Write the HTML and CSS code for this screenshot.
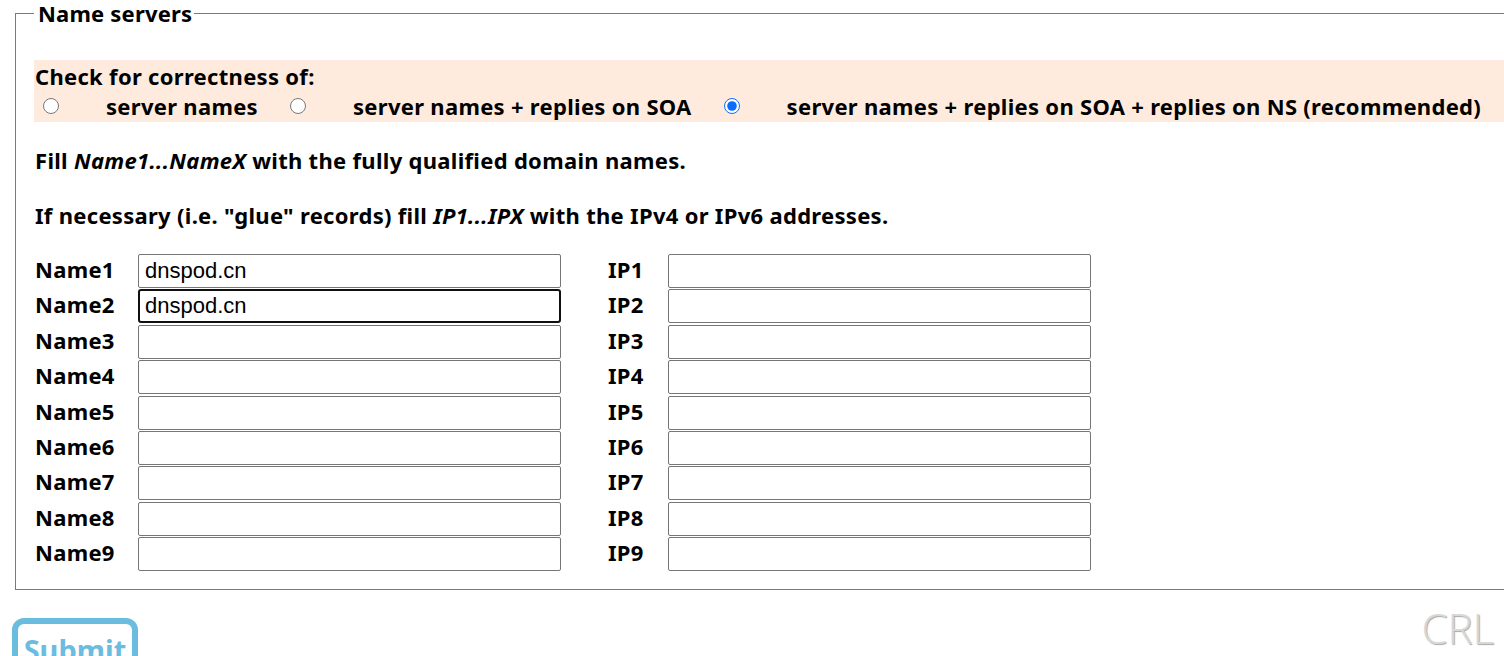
FILE: index.html
```html
<!DOCTYPE html>
<html lang="en">
<head>
  <meta charset="UTF-8" />
  <title>Name servers</title>
  <link rel="stylesheet" href="styles.css">
</head>
<body>

  <form class="check-form">
    <fieldset class="ns-box">
      <legend>Name servers</legend>

      <div class="check-type">
        <div class="check-title">Check for correctness of:</div>
        <div class="check-options">
          <input type="radio" name="level" id="lvl1">
          <label for="lvl1">server names</label>
          <input type="radio" name="level" id="lvl2">
          <label for="lvl2">server names + replies on SOA</label>
          <input type="radio" name="level" id="lvl3" checked>
          <label for="lvl3">server names + replies on SOA + replies on NS (recommended)</label>
        </div>
      </div>

      <p class="hint">Fill <em>Name1...NameX</em> with the fully qualified domain names.</p>
      <p class="hint">If necessary (i.e. "glue" records) fill <em>IP1...IPX</em> with the IPv4 or IPv6 addresses.</p>

      <div class="ns-grid">
        <label>Name1</label><input type="text" value="dnspod.cn"><label class="ip">IP1</label><input type="text">
        <label>Name2</label><input type="text" value="dnspod.cn" class="focused"><label class="ip">IP2</label><input type="text">
        <label>Name3</label><input type="text"><label class="ip">IP3</label><input type="text">
        <label>Name4</label><input type="text"><label class="ip">IP4</label><input type="text">
        <label>Name5</label><input type="text"><label class="ip">IP5</label><input type="text">
        <label>Name6</label><input type="text"><label class="ip">IP6</label><input type="text">
        <label>Name7</label><input type="text"><label class="ip">IP7</label><input type="text">
        <label>Name8</label><input type="text"><label class="ip">IP8</label><input type="text">
        <label>Name9</label><input type="text"><label class="ip">IP9</label><input type="text">
      </div>
    </fieldset>

    <div class="form-footer">
      <button type="button" class="submit-btn">Submit</button>
      <span class="crl">CRL</span>
    </div>
  </form>

</body>
</html>
```

FILE: styles.css
```css
html, body {
  overflow: hidden;
}

body {
  font-family: 'Noto Sans', 'Open Sans', sans-serif;
  font-weight: bold;
  font-size: 22px;
  letter-spacing: 0.3px;
  color: #000;
  background: #fff;
  margin: 0;
  padding: 0;
}

.check-form {
  padding: 0 0 0 15px;
}

.ns-box {
  width: 1560px;
  margin: 0;
  padding: 0 0 18px 18px;
  border: 1px solid #7a7a7a;
}

.ns-box legend {
  padding: 0 2px 0 4px;
  margin-left: 0;
  line-height: 26px;
  letter-spacing: 0.2px;
}

.check-type {
  background: #ffebdd;
  margin-top: 34px;
  padding: 1px 0 1px 1px;
  line-height: 30px;
}

.check-options {
  display: flex;
  align-items: center;
}

.check-options input {
  width: 16px;
  height: 16px;
  margin: 0 0 0 8px;
  accent-color: #0a6cff;
}

.check-options label {
  margin-left: 47px;
  margin-right: 24px;
}

.hint {
  margin: 22px 0 0 1px;
  line-height: 32px;
}

.hint + .hint {
  margin-top: 23px;
}

.hint em {
  font-style: italic;
}

.ns-grid {
  display: grid;
  grid-template-columns: 104px 423px 107px 423px;
  row-gap: 1.4px;
  margin-top: 23px;
  align-items: center;
}

.ns-grid label {
  padding: 0 0 4px 1px;
}

.ns-grid .ip {
  padding-left: 47px;
}

.ns-grid input {
  box-sizing: border-box;
  height: 34px;
  width: 423px;
  margin: 0;
  padding: 0 6px;
  border: 1px solid #767676;
  border-radius: 2px;
  font-family: 'Liberation Sans', Arial, sans-serif;
  font-weight: normal;
  font-size: 22px;
  letter-spacing: 0;
  color: #000;
}

.ns-grid input.focused {
  border: 2px solid #101010;
  border-radius: 3px;
  padding-left: 5px;
}

.form-footer {
  display: flex;
  justify-content: space-between;
  align-items: flex-start;
  margin-top: 28px;
  margin-left: -3px;
  padding-right: 10px;
}

.submit-btn {
  width: 126px;
  height: 56px;
  background: #fff;
  border: 6px solid #6bbde0;
  border-radius: 12px;
  color: #6bbde0;
  font-family: 'Noto Sans', 'Open Sans', sans-serif;
  font-weight: bold;
  font-size: 29px;
  letter-spacing: 0;
  padding: 8px 0 0;
  line-height: 32px;
}

.crl {
  font-family: 'Open Sans', sans-serif;
  font-weight: 300;
  font-size: 42px;
  letter-spacing: 0;
  color: #d8d8d8;
  text-shadow: 1px 1px 1px #aaa;
  line-height: 40px;
  margin-top: -10px;
}
```
